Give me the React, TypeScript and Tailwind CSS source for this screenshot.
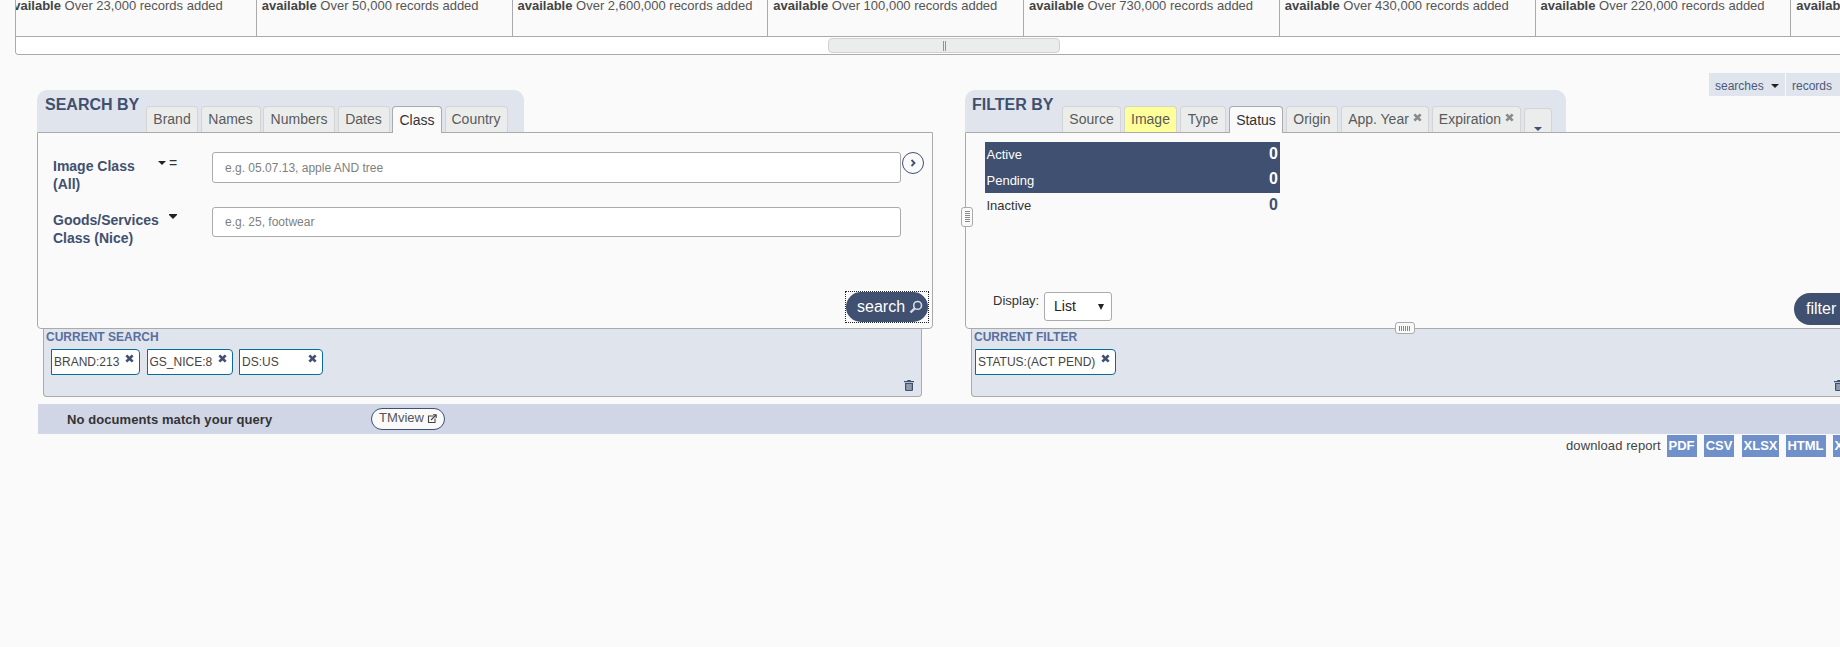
import React from "react";

function Xmark({ className = "" }: { className?: string }) {
  return (
    <svg viewBox="0 0 10 10" className={"w-[9px] h-[9px] shrink-0 " + className} fill="none" stroke="currentColor" strokeWidth="3">
      <path d="M1.5 1.5 8.5 8.5M8.5 1.5 1.5 8.5" />
    </svg>
  );
}

function Tab({ label, w, active, yellow, close }: { label: string; w: number; active?: boolean; yellow?: boolean; close?: boolean }) {
  return (
    <div
      style={{ width: w }}
      className={
        "h-[26px] shrink-0 flex items-center justify-center gap-[4px] rounded-t-[4px] border border-b-0 text-[14px] " +
        (active
          ? "relative z-10 h-[27px] -mb-px bg-[#fafafa] border-[#aaaaaa] text-[#333333]"
          : yellow
            ? "bg-[#ffff99] border-[#d4d4d4] text-[#5a5a5a]"
            : "bg-[#ebeded] border-[#d4d4d4] text-[#5a5a5a]")
      }
    >
      <span>{label}</span>
      {close && <Xmark className="text-[#8a8a8a] -mt-[4px]" />}
    </div>
  );
}

function Chip({ label, w }: { label: string; w: number }) {
  return (
    <div
      style={{ width: w }}
      className="h-[26px] shrink-0 flex items-center justify-between pl-[2px] pr-[5px] bg-white border border-[#0b6a9c] rounded-r-[4px] text-[12px] text-[#444444]"
    >
      <span className="whitespace-nowrap">{label}</span>
      <Xmark className="text-[#3f5070] -mt-[7px]" />
    </div>
  );
}

function Trash() {
  return (
    <svg viewBox="0 0 10 11" className="w-[10px] h-[11px]" fill="#3f5070">
      <path d="M3.5 0h3l.5 1h3v1.2H0V1h3z" />
      <path fillRule="evenodd" d="M1 3h8v7.2l-.8.8H1.8l-.8-.8zM2.6 4v6h.9V4zm1.9 0v6h1V4zm2 0v6h.9V4z" />
    </svg>
  );
}

function Magnifier() {
  return (
    <svg viewBox="0 0 14 14" className="w-[14px] h-[14px]" fill="none" stroke="#d5dae4">
      <circle cx="8.6" cy="5.4" r="3.9" strokeWidth="1.6" />
      <path d="M5.7 8.3 1.5 12.5" strokeWidth="2.4" />
    </svg>
  );
}

function Caret({ className = "" }: { className?: string }) {
  return <span className={"block w-0 h-0 border-x-[4px] border-x-transparent border-t-[4px] border-t-[#222222] " + className} />;
}

const cells = ["23,000", "50,000", "2,600,000", "100,000", "730,000", "430,000", "220,000", "190,000"];

function StatusRow({ label, dark }: { label: string; dark?: boolean }) {
  return (
    <div className={"h-[25.5px] flex items-center justify-between pl-[1.5px] pr-[2px] text-[13px] " + (dark ? "bg-[#3f5070] text-white" : "text-[#333333]")}>
      <span>{label}</span>
      <span className={"text-[16px] font-bold -mt-[2px] " + (dark ? "text-white" : "text-[#3f5070]")}>0</span>
    </div>
  );
}

export default function App() {
  return (
    <div className="w-[1840px] h-[647px] overflow-hidden bg-[#fafafa]" style={{ fontFamily: '"Liberation Sans", Arial, sans-serif' }}>
      <div className="w-[2000px]">
        {/* top carousel */}
        <div className="ml-[15px] w-[1900px] h-[55px] border-l border-b border-[#aaaaaa] rounded-bl-[4px] overflow-hidden">
          <div className="h-[37px] border-b border-[#aaaaaa] overflow-hidden">
            <div className="flex -ml-[15px] -mt-[2px]">
              {cells.map((c) => (
                <div key={c} className="w-[255.75px] h-[40px] shrink-0 border-r border-[#aaaaaa] pl-[5px] text-[13px] leading-[15px] text-[#555555] whitespace-nowrap">
                  <b className="text-[#444444]">available</b> Over {c} records added
                </div>
              ))}
            </div>
          </div>
          <div className="h-[17px] bg-white pt-[1px] pl-[812px]">
            <div className="w-[232px] h-[15px] bg-[#ebeded] border border-[#d0d0d0] rounded-[4px] flex items-center justify-center">
              <span className="w-[3px] h-[10px] border-x border-[#8a93a8]" />
            </div>
          </div>
        </div>

        {/* saved searches */}
        <div className="mt-[18px] pl-[1709px] flex gap-[1px] text-[12px] text-[#4a5a7a]">
          <div className="w-[76px] h-[23px] bg-[#e0e4ed] flex items-center gap-[7px] pl-[6px] pt-[2px]">
            searches <Caret />
          </div>
          <div className="w-[80px] h-[23px] bg-[#e0e4ed] flex items-center pl-[6px] pt-[2px]">records</div>
        </div>

        {/* panels */}
        <div className="-mt-[6px] pl-[37px] flex gap-[32px] items-start">
          {/* search */}
          <div className="w-[896px] shrink-0">
            <div className="w-[487px] h-[42px] bg-[#e0e4ed] rounded-t-[10px] flex items-end relative">
              <div className="absolute left-[8px] top-[3px] text-[16px] font-bold text-[#3f5070]">SEARCH BY</div>
              <div className="ml-[109px] flex gap-[2.5px]">
                <Tab label="Brand" w={52} />
                <Tab label="Names" w={60} />
                <Tab label="Numbers" w={72} />
                <Tab label="Dates" w={52} />
                <Tab label="Class" w={50} active />
                <Tab label="Country" w={63} />
              </div>
            </div>
            <div className="h-[197px] bg-[#fafafa] border border-[#aaaaaa] rounded-b-[4px] pl-[15px] pr-[3px] pt-[19px] flex flex-col">
              <div className="flex items-start">
                <div className="w-[105px] pt-[5px] text-[14px] leading-[18px] font-bold text-[#3f5070]">Image Class<br />(All)</div>
                <div className="w-[54px] flex items-center pt-[7px] gap-[3px] text-[14px] leading-[8px] text-[#333333]">
                  <Caret /><span>=</span>
                </div>
                <div className="w-[689px] h-[31px] bg-white border border-[#aaaaaa] rounded-[3px] flex items-center pl-[12px] text-[12px] text-[#808080]">e.g. 05.07.13, apple AND tree</div>
                <div className="ml-[1px] w-[22px] h-[22px] rounded-full border border-[#3f5070] flex items-center justify-center bg-[#fafafa]">
                  <svg viewBox="0 0 8 8" className="w-[8px] h-[8px]" fill="none" stroke="#3f5070" strokeWidth="1.8"><path d="M2.5 1 5.5 4 2.5 7" /></svg>
                </div>
              </div>
              <div className="flex items-start mt-[14px]">
                <div className="w-[116px] pt-[4px] text-[14px] leading-[18px] font-bold text-[#3f5070] whitespace-nowrap">Goods/Services<br />Class (Nice)</div>
                <div className="w-[43px] pt-[7px]">
                  <div className="h-[1px] w-[8px] bg-[#222222]" />
                  <Caret />
                </div>
                <div className="w-[689px] h-[30px] bg-white border border-[#aaaaaa] rounded-[3px] flex items-center pl-[12px] text-[12px] text-[#808080]">e.g. 25, footwear</div>
              </div>
              <div className="mt-auto mb-[5px] self-end w-[84px] h-[32px] border border-dotted border-[#222222]">
                <div className="h-full rounded-full bg-[#3f5070] flex items-center pl-[11px] gap-[4px] text-[16px] text-white">
                  search <Magnifier />
                </div>
              </div>
            </div>
            <div className="ml-[6px] w-[879px] h-[68px] bg-[#e0e4ed] border-x border-b border-[#aaaaaa] rounded-b-[4px] pl-[2px] flex flex-col">
              <div className="text-[12px] leading-[14px] mt-[1px] font-bold text-[#5a6f9f]">CURRENT SEARCH</div>
              <div className="mt-[5px] ml-[5px] flex gap-[6.5px]">
                <Chip label="BRAND:213" w={89} />
                <Chip label="GS_NICE:8" w={86} />
                <Chip label="DS:US" w={84} />
              </div>
              <div className="mt-auto mb-[5px] ml-[858px]"><Trash /></div>
            </div>
          </div>

          {/* filter */}
          <div className="w-[960px] shrink-0 relative">
            <div className="w-[601px] h-[42px] bg-[#e0e4ed] rounded-t-[10px] flex items-end relative">
              <div className="absolute left-[7px] top-[3px] text-[16px] font-bold text-[#3f5070]">FILTER BY</div>
              <div className="ml-[97px] flex gap-[3px] items-end">
                <Tab label="Source" w={59} />
                <Tab label="Image" w={53} yellow />
                <Tab label="Type" w={46} />
                <Tab label="Status" w={54} active />
                <Tab label="Origin" w={52} />
                <Tab label="App. Year" w={88} close />
                <Tab label="Expiration" w={89} close />
                <div className="w-[28px] h-[24px] rounded-t-[4px] border border-b-0 border-[#d4d4d4] bg-[#ebeded] flex items-end justify-center">
                  <span className="block w-0 h-0 border-x-[4px] border-x-transparent border-t-[4px] border-t-[#3f5070] mb-[1px]" />
                </div>
              </div>
            </div>
            <div className="h-[197px] bg-[#fafafa] border border-[#aaaaaa] rounded-bl-[4px] pl-[19px] pt-[9px] relative flex flex-col">
              <div className="w-[295px]">
                <StatusRow label="Active" dark />
                <StatusRow label="Pending" dark />
                <StatusRow label="Inactive" />
              </div>
              <div className="mt-auto mb-[7px] ml-[8px] flex items-start">
                <span className="text-[13px] text-[#333333] w-[51px] leading-[15px] mt-[1px]">Display:</span>
                <div className="w-[68px] h-[29px] bg-white border border-[#aaaaaa] rounded-[3px] flex items-center justify-between pl-[9px] pr-[7px] text-[14px] text-[#222222]">
                  List <span className="w-0 h-0 border-x-[3.5px] border-x-transparent border-t-[6px] border-t-[#222222]" />
                </div>
              </div>
              <div className="absolute left-[828px] top-[160px] w-[82px] h-[32px] rounded-full bg-[#3f5070] flex items-center pl-[12px] text-[16px] text-white">filter</div>
              <div className="absolute -left-[5px] top-[74px] w-[12px] h-[20px] bg-[#fafafa] border border-[#aaaaaa] rounded-[3px] flex items-center justify-center">
                <span className="w-[5px] h-[12px] bg-[repeating-linear-gradient(to_bottom,#888888_0,#888888_1px,transparent_1px,transparent_2px)]" />
              </div>
              <div className="absolute left-[429px] top-[189px] w-[20px] h-[12px] bg-[#fafafa] border border-[#aaaaaa] rounded-[3px] flex items-center justify-center z-10">
                <span className="w-[12px] h-[5px] bg-[repeating-linear-gradient(to_right,#888888_0,#888888_1px,transparent_1px,transparent_2px)]" />
              </div>
            </div>
            <div className="ml-[6px] w-[900px] h-[68px] bg-[#e0e4ed] border-l border-b border-[#aaaaaa] rounded-bl-[4px] pl-[2px] flex flex-col">
              <div className="text-[12px] leading-[14px] mt-[1px] font-bold text-[#5a6f9f]">CURRENT FILTER</div>
              <div className="mt-[5px] ml-[1px] flex">
                <Chip label="STATUS:(ACT PEND)" w={141} />
              </div>
              <div className="mt-auto mb-[5px] ml-[860px]"><Trash /></div>
            </div>
          </div>
        </div>

        {/* result bar */}
        <div className="mt-[7px] ml-[38px] h-[30px] bg-[#d0d6e6] flex items-center">
          <span className="w-[303px] pl-[29px] pt-[1px] text-[13px] font-bold tracking-[0.08px] text-[#333333] whitespace-nowrap">No documents match your query</span>
          <div className="ml-[30px] w-[74px] h-[22px] rounded-full bg-[#fafafa] border border-[#3f5070] flex items-center justify-center gap-[3px] text-[13px] text-[#555555]">
            <span className="-mt-[2px]">TMview</span>
            <svg viewBox="0 0 10 10" className="w-[10px] h-[10px]" fill="none" stroke="#444444" strokeWidth="1.1">
              <path d="M6.5 2H1.5v6.5H8V4.5" />
              <path d="M4 6 9 1M6 .8h3.2V4" />
            </svg>
          </div>
        </div>

        {/* download */}
        <div className="mt-[1px] pl-[1566px] flex items-center text-[13px] tracking-[0.1px] text-[#444444]">
          <span className="w-[100.5px] whitespace-nowrap">download report</span>
          <div className="flex text-[13px] tracking-normal font-bold text-white">
            <div className="w-[30px] h-[22px] bg-[#6f90c8] flex items-center justify-center">PDF</div>
            <div className="ml-[7.5px] w-[30px] h-[22px] bg-[#6f90c8] flex items-center justify-center">CSV</div>
            <div className="ml-[8px] w-[37px] h-[22px] bg-[#6f90c8] flex items-center justify-center">XLSX</div>
            <div className="ml-[6.5px] w-[40px] h-[22px] bg-[#6f90c8] flex items-center justify-center">HTML</div>
            <div className="ml-[7px] w-[40px] h-[22px] bg-[#6f90c8] flex items-center pl-[2px]">XML</div>
          </div>
        </div>
      </div>
    </div>
  );
}
